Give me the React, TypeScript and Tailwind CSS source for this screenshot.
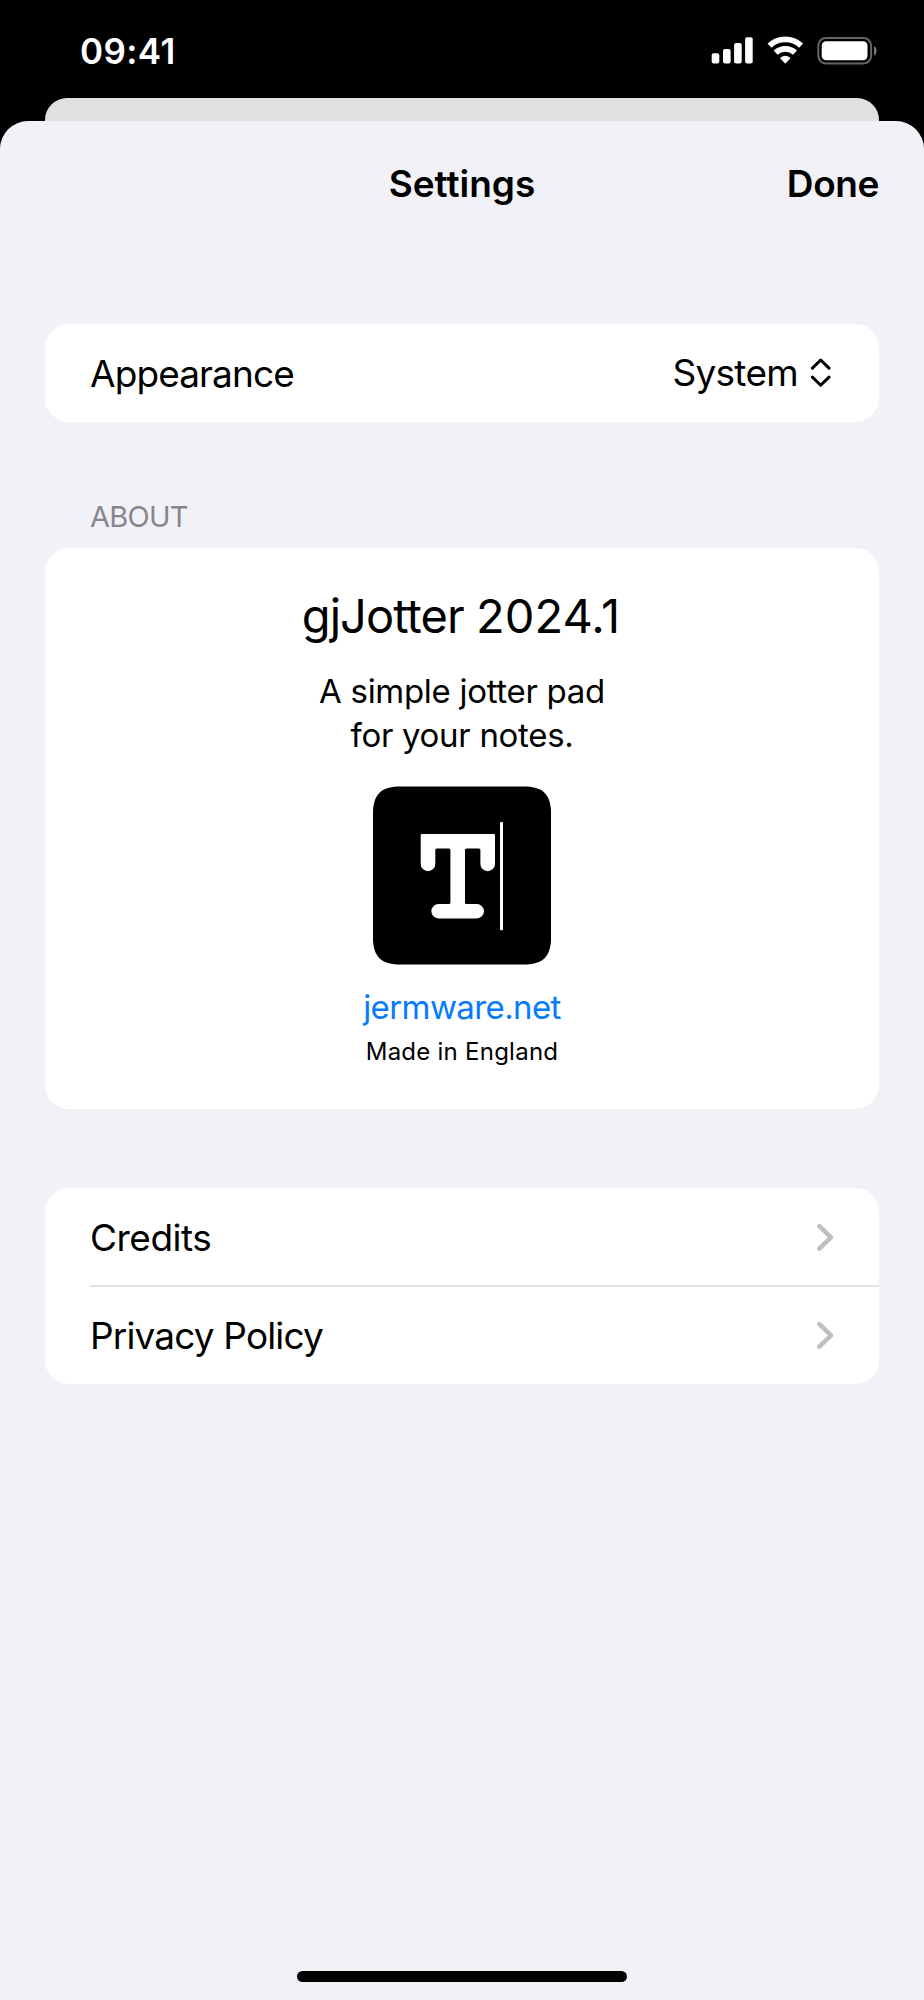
import React from "react";

function StatusIcons() {
  return (
    <svg width="168" height="30" viewBox="0 0 168 30" fill="none">
      {/* Signal */}
      <rect x="0.7" y="17.3" width="7.6" height="10.2" rx="2" fill="white" />
      <rect x="12" y="13" width="7.6" height="14.5" rx="2" fill="white" />
      <rect x="23.1" y="7" width="7.6" height="20.5" rx="2" fill="white" />
      <rect x="34.1" y="1.3" width="7.6" height="26.2" rx="2" fill="white" />

      {/* Wi-Fi */}
      <path d="M58.5 9.6A23.4 23.4 0 0 1 90.1 9.6" stroke="white" strokeWidth="5.8" />
      <path d="M64.6 16.6A14.4 14.4 0 0 1 84 16.6" stroke="white" strokeWidth="5.8" />
      <path
        d="M69.8 22.2A7.2 7.2 0 0 1 78.8 22.2L74.3 26.8Z"
        fill="white"
        stroke="white"
        strokeWidth="1.2"
        strokeLinejoin="round"
      />

      {/* Battery */}
      <rect x="107.3" y="2" width="52.8" height="25.4" rx="7.5" stroke="#656565" strokeWidth="2" />
      <rect x="110.7" y="5.2" width="45.8" height="19" rx="4.5" fill="white" />
      <path d="M163 9.8Q165.6 11.2 165.6 14.7T163 19.6Z" fill="#7a7a7a" />
    </svg>
  );
}

function UpDownIcon() {
  return (
    <svg width="22" height="30" viewBox="0 0 22 30" fill="none">
      <path
        d="M2.4 10.1L10.7 2L19 10.1M2.4 19.1L10.7 27.2L19 19.1"
        stroke="black"
        strokeWidth="3"
        strokeLinecap="round"
        strokeLinejoin="round"
      />
    </svg>
  );
}

function ChevronIcon() {
  return (
    <svg width="18" height="28" viewBox="0 0 18 28" fill="none">
      <path
        d="M2.4 3.1L14 14.4L2.4 25.7"
        stroke="#bfbfbf"
        strokeWidth="4.5"
        strokeLinecap="round"
        strokeLinejoin="round"
      />
    </svg>
  );
}

function AppIcon() {
  return (
    <svg width="178" height="179" viewBox="0 -0.4 178 179">
      <path
        d="M24 0H154C170 1 177 8 178 24V154C177 170 170 177 154 178H24C8 177 1 170 0 154V24C1 8 8 1 24 0Z"
        fill="black"
      />
      <path
        d="M49 47.7H120.8Q122 47.7 122 49V77.5A7.3 7.3 0 0 1 107.4 77.5V63.5Q107.4 62 106 62H93.5Q92 62 92 63.5V116.4Q92 117.7 93.5 117.7H103.8A7.1 7.1 0 0 1 103.8 132H65.5A7.1 7.1 0 0 1 65.5 117.7H76Q77.4 117.7 77.4 116.4V63.5Q77.4 62 76 62H63.8Q62.3 62 62.3 63.5V77.5A7.3 7.3 0 0 1 47.7 77.5V49Q47.7 47.7 49 47.7Z"
        fill="white"
      />
      <rect x="127" y="35.7" width="3" height="108.2" rx="1" fill="white" />
    </svg>
  );
}

interface LinkRowProps {
  label: string;
  labelClassName: string;
}

function LinkRow({ label, labelClassName }: LinkRowProps) {
  return (
    <button type="button" className="flex h-[98px] w-full items-center justify-between pr-[44px]">
      <span className={`pt-[2px] text-[37px] ${labelClassName}`}>{label}</span>
      <ChevronIcon />
    </button>
  );
}

export default function App() {
  return (
    <div className="flex h-[2000px] w-[924px] flex-col bg-black font-['Inter',sans-serif] text-black">
      {/* Status bar */}
      <div className="flex h-[98px] shrink-0 items-start justify-between pl-[80px] pr-[45px] pt-[36px]">
        <span className="text-[35px] font-semibold leading-[30px] tracking-[0.4px] text-white">09:41</span>
        <StatusIcons />
      </div>

      {/* Page behind the sheet */}
      <div className="mx-[45px] h-[22.5px] shrink-0 rounded-t-[22px] bg-[#e0e0e0]" />

      {/* Sheet */}
      <main className="flex flex-1 flex-col rounded-t-[28px] bg-[#f2f1f8] px-[45px]">
        <header className="grid h-[126.5px] grid-cols-3 items-center text-[37px] font-semibold">
          <span />
          <h1 className="text-center tracking-[0px]">Settings</h1>
          <button type="button" className="text-right tracking-[-0.4px]">
            Done
          </button>
        </header>

        <section className="mt-[77px] flex h-[98px] items-center justify-between rounded-[24px] bg-white pl-[45px] pr-[47px]">
          <span className="pt-[2px] text-[37px] tracking-[-0.9px]">Appearance</span>
          <button type="button" className="flex items-center gap-[12px]">
            <span className="text-[37px] tracking-[-0.7px]">System</span>
            <UpDownIcon />
          </button>
        </section>

        <h2 className="mt-[75px] pl-[45px] text-[29px] leading-[40px] tracking-[-0.75px] text-[#86868b]">
          ABOUT
        </h2>

        <section className="mt-[11px] flex h-[561px] flex-col items-center rounded-[24px] bg-white pt-[40px]">
          <h3 className="pr-[2px] text-[47px] leading-[56px] tracking-[-0.95px]">
            gjJotter <span className="tracking-[0.1px]">2024.1</span>
          </h3>
          <p className="mt-[25px] text-center text-[33px] leading-[44px] tracking-[-0.3px]">
            A simple jotter pad
            <br />
            for your notes.
          </p>
          <div className="mt-[29px]">
            <AppIcon />
          </div>
          <a href="#" className="mt-[20px] text-[33px] leading-[44px] tracking-[-0.6px] text-[#067bff]">
            jermware.net
          </a>
          <p className="mt-[7px] text-[24px] leading-[32px] tracking-[0.25px]">Made in England</p>
        </section>

        <section className="mt-[79px] rounded-[24px] bg-white pl-[45px]">
          <LinkRow label="Credits" labelClassName="tracking-[-0.5px]" />
          <div className="-my-px h-[2px] bg-[#e3e3e5]" />
          <LinkRow label="Privacy Policy" labelClassName="tracking-[-0.85px]" />
        </section>

        {/* Home indicator */}
        <div className="mx-auto mb-[18px] mt-auto h-[11px] w-[330px] rounded-full bg-black" />
      </main>
    </div>
  );
}
